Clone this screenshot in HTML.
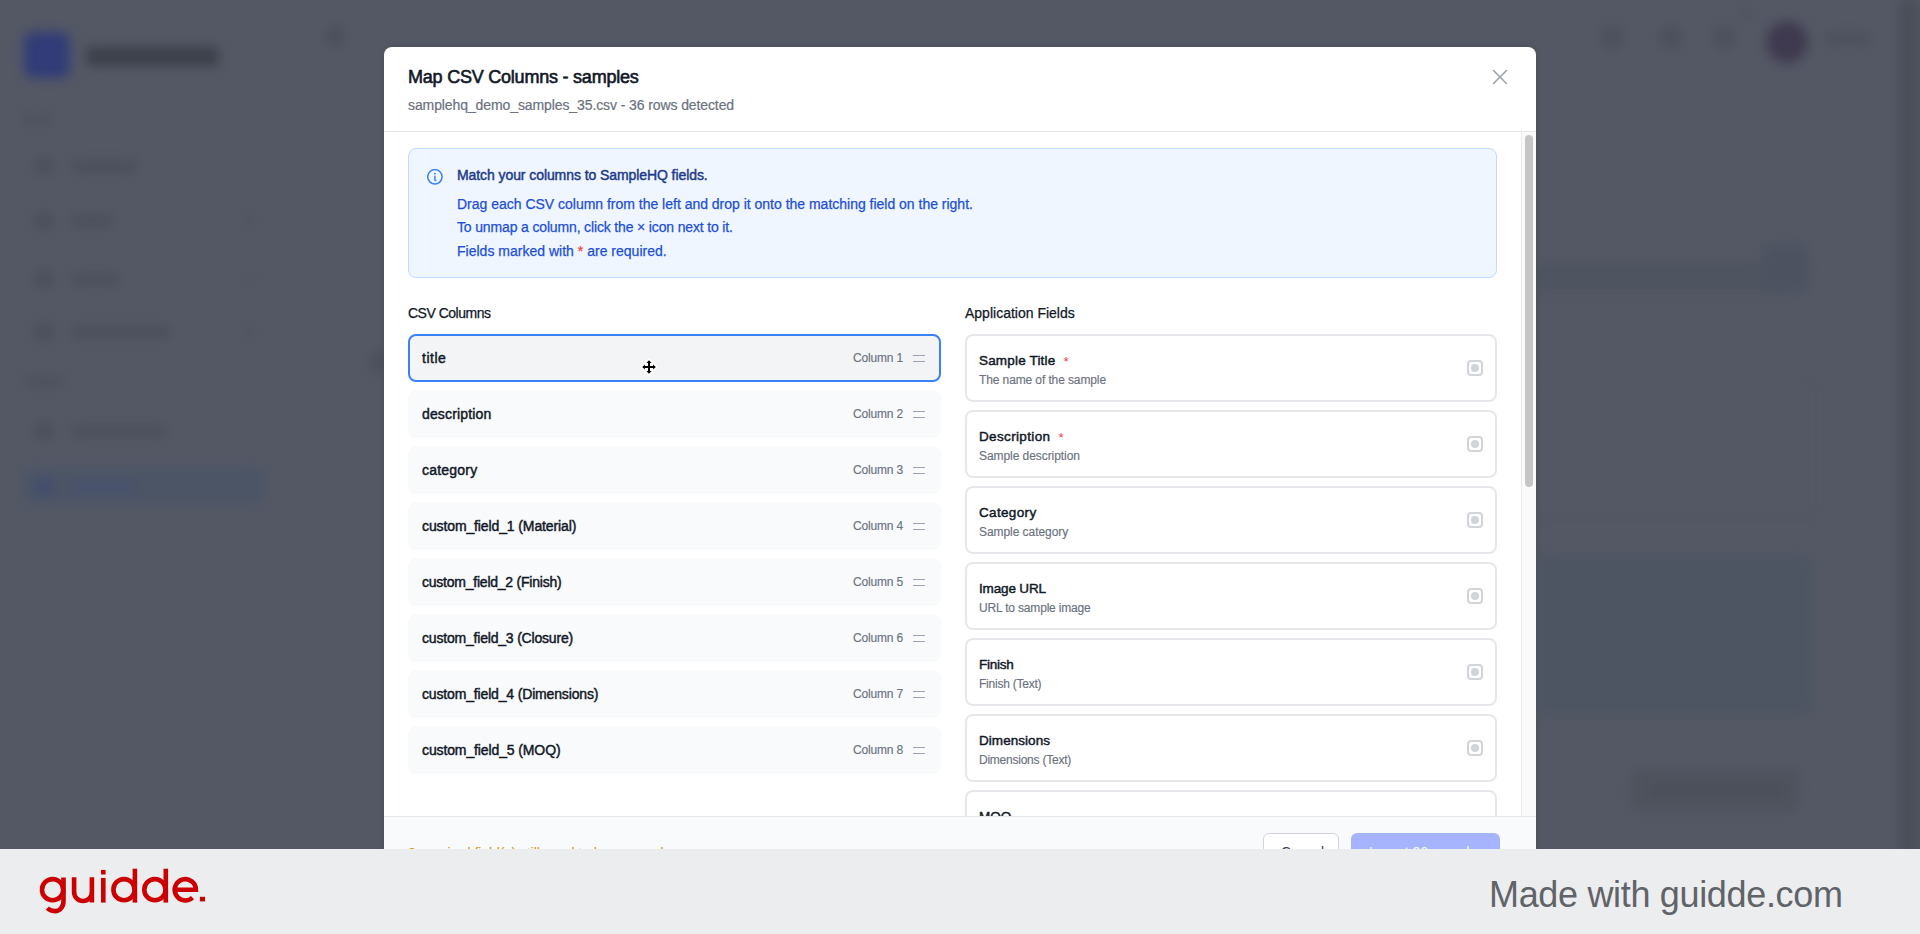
<!DOCTYPE html>
<html><head><meta charset="utf-8">
<style>
*{box-sizing:border-box;margin:0;padding:0}
html,body{width:1920px;height:934px;overflow:hidden}
body{position:relative;background:#545865;font-family:"Liberation Sans",sans-serif;color:#111827}
.a{position:absolute}
.t{position:absolute;white-space:pre;line-height:1}
#bg{position:absolute;left:0;top:0;width:1920px;height:934px;filter:blur(6px)}
#bg div{position:absolute}
#modal{position:absolute;left:384px;top:47px;width:1152px;height:900px;background:#fff;border-radius:8px;box-shadow:0 0 6px rgba(0,0,0,0.12)}
#scroll{position:absolute;left:0;top:0;width:1920px;height:934px;clip-path:inset(132px 398px 118px 384px)}
.item{position:absolute;left:408px;width:533px;height:48px;border-radius:8px;background:#F9FAFB}
.item.sel{background:#F3F4F6;border:2px solid #3B82F6}
.iname{position:absolute;left:422px;font-size:14px;font-weight:400;-webkit-text-stroke:0.45px #111827;letter-spacing:0.05px;color:#111827;white-space:pre;line-height:1}
.icol{position:absolute;right:1017px;font-size:12px;-webkit-text-stroke-width:0.15px;letter-spacing:-0.18px;color:#6B7280;white-space:pre;line-height:1}
.grip{position:absolute;left:913px;width:12px;height:7.5px;border-top:1.5px solid #9CA3AF;border-bottom:1.5px solid #9CA3AF}
.card{position:absolute;left:965px;width:532px;height:68px;border:2px solid #E5E7EB;border-radius:8px;background:#fff}
.clab{position:absolute;left:979px;font-size:13.5px;font-weight:400;-webkit-text-stroke:0.45px #111827;letter-spacing:0.05px;color:#111827;white-space:pre;line-height:1}
.cdesc{position:absolute;left:979px;font-size:12px;-webkit-text-stroke-width:0.15px;letter-spacing:-0.1px;color:#6B7280;white-space:pre;line-height:1}
.req{color:#EF4444;font-weight:400;margin-left:8px;-webkit-text-stroke:0;letter-spacing:0;position:relative;top:1px}
.chk{position:absolute;left:1467px;width:16px;height:16px;border:2px solid #D1D5DB;border-radius:4px}
.chk:after{content:"";position:absolute;left:2px;top:2px;width:8px;height:8px;border-radius:50%;background:#D1D5DB}
#banner{position:absolute;left:0;top:849px;width:1920px;height:85px;background:#ECEDEF}
</style></head>
<body>
<div id="bg"><div style="left:24px;top:32px;width:46px;height:46px;background:#313C78;border-radius:9px;"></div><div style="left:86px;top:47px;width:133px;height:19px;background:#3C404A;border-radius:5px;"></div><div style="left:326px;top:27px;width:19px;height:19px;background:#4B4F5A;border-radius:10px;"></div><div style="left:20px;top:115px;width:33px;height:9px;background:#4E525D;border-radius:3px;"></div><div style="left:36px;top:158px;width:16px;height:16px;background:#4A4E59;border-radius:4px;"></div><div style="left:72px;top:161px;width:65px;height:10px;background:#4A4E59;border-radius:3px;"></div><div style="left:36px;top:213px;width:16px;height:16px;background:#4A4E59;border-radius:4px;"></div><div style="left:72px;top:216px;width:40px;height:10px;background:#4A4E59;border-radius:3px;"></div><div style="left:244px;top:217px;width:10px;height:8px;background:#4E525D;border-radius:3px;"></div><div style="left:36px;top:271px;width:16px;height:16px;background:#4A4E59;border-radius:4px;"></div><div style="left:72px;top:274px;width:46px;height:10px;background:#4A4E59;border-radius:3px;"></div><div style="left:244px;top:275px;width:10px;height:8px;background:#4E525D;border-radius:3px;"></div><div style="left:36px;top:324px;width:16px;height:16px;background:#4A4E59;border-radius:4px;"></div><div style="left:72px;top:327px;width:98px;height:10px;background:#4A4E59;border-radius:3px;"></div><div style="left:244px;top:328px;width:10px;height:8px;background:#4E525D;border-radius:3px;"></div><div style="left:36px;top:422.6px;width:16px;height:16.0px;background:#4A4E59;border-radius:4px;"></div><div style="left:72px;top:425.6px;width:93px;height:10.0px;background:#4A4E59;border-radius:3px;"></div><div style="left:23px;top:376px;width:43px;height:11px;background:#4E525D;border-radius:3px;"></div><div style="left:22px;top:468px;width:244px;height:36px;background:#4C5566;border-radius:8px;"></div><div style="left:36px;top:479px;width:16px;height:16px;background:#414B70;border-radius:4px;"></div><div style="left:72px;top:482px;width:61px;height:10px;background:#46506F;border-radius:3px;"></div><div style="left:372px;top:352px;width:12px;height:20px;background:#4A4E58;border-radius:4px;"></div><div style="left:1601px;top:27px;width:22px;height:22px;background:#4B505C;border-radius:11px;"></div><div style="left:1660px;top:27px;width:22px;height:22px;background:#4B505C;border-radius:11px;"></div><div style="left:1713px;top:27px;width:22px;height:22px;background:#4B505C;border-radius:11px;"></div><div style="left:1740px;top:10px;width:10px;height:10px;background:#514E58;border-radius:5px;"></div><div style="left:1766px;top:21px;width:42px;height:42px;background:#3F3A4F;border-radius:21px;"></div><div style="left:1825px;top:33px;width:45px;height:11px;background:#4C505B;border-radius:4px;"></div><div style="left:1900px;top:0px;width:20px;height:934px;background:#4A4E58;border-radius:0px;"></div><div style="left:1536px;top:262px;width:269px;height:30px;background:#4F5461;border-radius:6px;"></div><div style="left:1763px;top:245px;width:45px;height:47px;background:#4C5260;border-radius:8px;"></div><div style="left:1536px;top:376px;width:281px;height:2px;background:#51555F;border-radius:0px;"></div><div style="left:1815px;top:376px;width:2px;height:144px;background:#51555F;border-radius:0px;"></div><div style="left:1536px;top:518px;width:281px;height:3px;background:#51555F;border-radius:0px;"></div><div style="left:1536px;top:555px;width:277px;height:160px;background:#4E5562;border-radius:8px;"></div><div style="left:1630px;top:768px;width:170px;height:44px;background:#4F535E;border-radius:10px;"></div><div style="left:1650px;top:784px;width:135px;height:12px;background:#4A4E58;border-radius:4px;"></div></div>
<div id="modal"></div>
<div class="t" style="left:408px;top:68px;font-size:18px;font-weight:400;-webkit-text-stroke:0.6px #111827;letter-spacing:-0.22px;color:#111827">Map CSV Columns - samples</div>
<div class="t" style="left:408px;top:98px;font-size:14px;letter-spacing:-0.1px;-webkit-text-stroke-width:0.2px;color:#6B7280">samplehq_demo_samples_35.csv - 36 rows detected</div>
<svg class="a" style="left:1490px;top:67px" width="20" height="20" viewBox="0 0 20 20"><path d="M3.5 3.5 L16.5 16.5 M16.5 3.5 L3.5 16.5" stroke="#9CA3AF" stroke-width="1.6" stroke-linecap="round"/></svg>
<div class="a" style="left:384px;top:131px;width:1152px;height:1px;background:#E5E7EB"></div>
<div id="scroll"><div class="a" style="left:408px;top:148px;width:1089px;height:130px;background:#EFF6FF;border:1px solid #BFDBFE;border-radius:8px"></div>
<svg class="a" style="left:427px;top:169px" width="16" height="16" viewBox="0 0 16 16"><circle cx="7.9" cy="7.8" r="7.2" fill="none" stroke="#3B82F6" stroke-width="1.5"/><circle cx="7.9" cy="4.7" r="0.9" fill="#3B82F6"/><path d="M7.9 7.2 V10.8 Q7.9 11.6 8.8 11.6" fill="none" stroke="#3B82F6" stroke-width="1.5" stroke-linecap="round"/></svg>
<div class="t" style="left:457px;top:168px;font-size:14px;font-weight:400;-webkit-text-stroke:0.45px #1E3A8A;letter-spacing:-0.08px;color:#1E3A8A">Match your columns to SampleHQ fields.</div>
<div class="t" style="left:457px;top:196.5px;font-size:14px;letter-spacing:-0.01px;-webkit-text-stroke-width:0.25px;color:#1D4ED8">Drag each CSV column from the left and drop it onto the matching field on the right.</div>
<div class="t" style="left:457px;top:220.2px;font-size:14px;letter-spacing:-0.15px;-webkit-text-stroke-width:0.25px;color:#1D4ED8">To unmap a column, click the × icon next to it.</div>
<div class="t" style="left:457px;top:244.2px;font-size:14px;letter-spacing:0.01px;-webkit-text-stroke-width:0.25px;color:#1D4ED8">Fields marked with <span style="color:#EF4444">*</span> are required.</div>
<div class="t" style="left:408px;top:305.7px;font-size:14px;font-weight:400;-webkit-text-stroke:0.25px #111827;letter-spacing:-0.5px;color:#111827">CSV Columns</div>
<div class="t" style="left:965px;top:305.7px;font-size:14px;font-weight:400;-webkit-text-stroke:0.25px #111827;letter-spacing:0.0px;color:#111827">Application Fields</div>
<div class="item sel" style="top:334px"></div>
<div class="iname" style="top:350.9px;letter-spacing:0.5px">title</div>
<div class="icol" style="top:351.6px">Column 1</div>
<div class="grip" style="top:354.5px"></div>
<div class="item" style="top:390px"></div>
<div class="iname" style="top:406.9px;letter-spacing:0.15px">description</div>
<div class="icol" style="top:407.6px">Column 2</div>
<div class="grip" style="top:410.5px"></div>
<div class="item" style="top:446px"></div>
<div class="iname" style="top:462.9px;letter-spacing:0.222px">category</div>
<div class="icol" style="top:463.6px">Column 3</div>
<div class="grip" style="top:466.5px"></div>
<div class="item" style="top:502px"></div>
<div class="iname" style="top:518.9px;letter-spacing:-0.117px">custom_field_1 (Material)</div>
<div class="icol" style="top:519.6px">Column 4</div>
<div class="grip" style="top:522.5px"></div>
<div class="item" style="top:558px"></div>
<div class="iname" style="top:574.9px;letter-spacing:-0.232px">custom_field_2 (Finish)</div>
<div class="icol" style="top:575.6px">Column 5</div>
<div class="grip" style="top:578.5px"></div>
<div class="item" style="top:614px"></div>
<div class="iname" style="top:630.9px;letter-spacing:-0.194px">custom_field_3 (Closure)</div>
<div class="icol" style="top:631.6px">Column 6</div>
<div class="grip" style="top:634.5px"></div>
<div class="item" style="top:670px"></div>
<div class="iname" style="top:686.9px;letter-spacing:-0.157px">custom_field_4 (Dimensions)</div>
<div class="icol" style="top:687.6px">Column 7</div>
<div class="grip" style="top:690.5px"></div>
<div class="item" style="top:726px"></div>
<div class="iname" style="top:742.9px;letter-spacing:-0.118px">custom_field_5 (MOQ)</div>
<div class="icol" style="top:743.6px">Column 8</div>
<div class="grip" style="top:746.5px"></div>
<div class="card" style="top:334px"></div>
<div class="clab" style="top:354.3px;letter-spacing:0.177px">Sample Title<span class="req">*</span></div>
<div class="cdesc" style="top:374.2px;letter-spacing:-0.11px">The name of the sample</div>
<div class="chk" style="top:360px"></div>
<div class="card" style="top:410px"></div>
<div class="clab" style="top:430.3px;letter-spacing:0.35px">Description<span class="req">*</span></div>
<div class="cdesc" style="top:450.2px;letter-spacing:-0.064px">Sample description</div>
<div class="chk" style="top:436px"></div>
<div class="card" style="top:486px"></div>
<div class="clab" style="top:506.3px;letter-spacing:0.336px">Category</div>
<div class="cdesc" style="top:526.2px;letter-spacing:-0.058px">Sample category</div>
<div class="chk" style="top:512px"></div>
<div class="card" style="top:562px"></div>
<div class="clab" style="top:582.3px;letter-spacing:-0.15px">Image URL</div>
<div class="cdesc" style="top:602.2px;letter-spacing:-0.177px">URL to sample image</div>
<div class="chk" style="top:588px"></div>
<div class="card" style="top:638px"></div>
<div class="clab" style="top:658.3px;letter-spacing:-0.23px">Finish</div>
<div class="cdesc" style="top:678.2px;letter-spacing:-0.234px">Finish (Text)</div>
<div class="chk" style="top:664px"></div>
<div class="card" style="top:714px"></div>
<div class="clab" style="top:734.3px;letter-spacing:0.05px">Dimensions</div>
<div class="cdesc" style="top:754.2px;letter-spacing:-0.237px">Dimensions (Text)</div>
<div class="chk" style="top:740px"></div>
<div class="card" style="top:790px"></div>
<div class="clab" style="top:810.3px;letter-spacing:0.05px">MOQ</div>
<div class="cdesc" style="top:830.2px;letter-spacing:-0.1px">Minimum order quantity</div>
<div class="chk" style="top:816px"></div></div>
<div class="a" style="left:1521px;top:132px;width:15px;height:684px;background:#FAFAFA;border-left:1px solid #EAEAEA"></div>
<div class="a" style="left:1525px;top:135px;width:8px;height:352px;background:#C6C6C6;border-radius:4px"></div>
<div class="a" style="left:384px;top:816px;width:1152px;height:1px;background:#E5E7EB"></div>
<div class="a" style="left:384px;top:817px;width:1152px;height:40px;background:#F9FAFB"></div>
<div class="t" style="left:408px;top:845.5px;font-size:14px;letter-spacing:-0.05px;color:#D4940A">2 required field(s) still need to be mapped</div>
<div class="a" style="left:1263px;top:833px;width:76px;height:38px;background:#fff;border:1px solid #D1D5DB;border-radius:6px"></div>
<div class="t" style="left:1281px;top:845px;font-size:14px;font-weight:400;letter-spacing:-0.1px;color:#374151">Cancel</div>
<div class="a" style="left:1351px;top:833px;width:149px;height:38px;background:#A5B4FC;border-radius:6px"></div>
<div class="t" style="left:1369px;top:845px;font-size:14px;font-weight:400;letter-spacing:0px;color:#fff">Import 36 samples</div>
<svg class="a" style="left:639px;top:357px" width="20" height="20" viewBox="0 0 20 20"><g stroke="#fff" stroke-width="3.5" stroke-linejoin="round" fill="#fff"><path d="M10 3.5 V16.5 M3.5 10 H16.5"/><path d="M10 3 L12.5 5.6 H7.5Z M10 17 L12.5 14.4 H7.5Z M3 10 L5.6 12.5 V7.5Z M17 10 L14.4 12.5 V7.5Z"/></g><g stroke="#000" stroke-width="2" fill="#000"><path d="M10 5 V15 M5 10 H15"/></g><path d="M10 3.2 L12.6 5.9 H7.4Z M10 16.8 L12.6 14.1 H7.4Z M3.2 10 L5.9 12.6 V7.4Z M16.8 10 L14.1 12.6 V7.4Z" fill="#000"/></svg>
<div id="banner"><svg class="a" style="left:0;top:0" width="260" height="85" viewBox="0 0 260 85"><g fill="none" stroke="#CC0000" stroke-width="4.6"><circle cx="52.6" cy="40.7" r="10.6"/><path d="M63.5 28.5 V52 C63.5 58.5 59.5 62.1 55 62.1 C51.5 62.1 49 60.8 47.3 59.2"/><path d="M74.1 28.3 V43 A8.9 9 0 0 0 91.9 43 V53.6 M91.9 28.3 V53.6"/><path d="M103.3 28.9 V53.6"/><circle cx="124" cy="40.7" r="10.6"/><path d="M134.9 19.7 V53.6"/><circle cx="154.9" cy="40.7" r="10.6"/><path d="M165.8 19.7 V53.6"/><path d="M174.7 40.7 H195.9 A10.6 10.6 0 1 0 192.5 48.6"/></g><g fill="#CC0000"><rect x="101" y="20.9" width="4.6" height="4.6"/><rect x="199.9" y="47.8" width="5.1" height="4.6"/></g></svg><div class="t" style="left:1489px;top:28px;font-size:36px;letter-spacing:-0.33px;color:#606368">Made with guidde.com</div></div>
</body></html>
